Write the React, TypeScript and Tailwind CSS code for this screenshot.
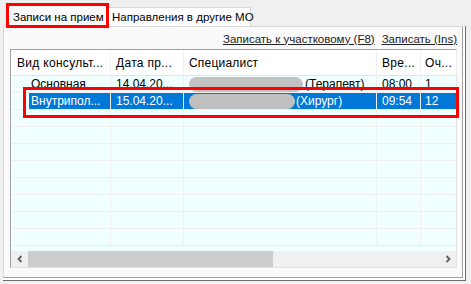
import React from "react";

const rowsEmpty = Array.from({ length: 8 });

function Cell({ w, children, cls = "" }: { w: string; children?: React.ReactNode; cls?: string }) {
  return <div className={`${w} h-full shrink-0 border-r border-[#f0f0f0] flex items-center overflow-hidden whitespace-nowrap ${cls}`}>{children}</div>;
}

export default function App() {
  return (
    <div
      className="w-[471px] h-[284px] bg-[#f0f0f0] relative overflow-hidden text-[12px] leading-[14px] text-black whitespace-nowrap"
      style={{ fontFamily: '"Liberation Sans", Arial, sans-serif' }}
    >
      <div className="pt-[4px] pl-[6px] flex items-end h-[26px] text-[11.5px]">
        <div className="w-[102px] h-[22px] bg-[#fafafa] border border-b-0 border-[#d9d9d9] flex items-center pl-[6px] relative z-10 mb-[-1px]">
          Записи на прием
        </div>
        <div className="w-[143px] h-[19px] bg-white border border-b-0 border-l-0 border-[#d9d9d9] flex items-center pl-[4px]">
          Направления в другие МО
        </div>
      </div>
      <div className="ml-[3px] w-[463px] h-[255px] border-r border-b border-[#6d6d6d] bg-white">
        <div className="w-[460px] h-[252px] bg-[#fafafa] border border-[#d9d9d9] border-r-[#a0a0a0] border-b-[#a0a0a0] pt-[3px]">
          <div className="flex justify-end gap-[7px] pr-[5px] h-[17px] items-center text-[#222] text-[11.5px]">
            <span className="underline">Записать к участковому (F8)</span>
            <span className="underline">Записать (Ins)</span>
          </div>
          <div className="ml-[6px] mt-[2px] w-[447px] h-[219px] border border-[#a0a0a0] border-r-[#e3e3e3] border-b-[#e3e3e3] bg-white flex flex-col">
            <div className="h-[26px] flex bg-white border-b border-[#e5e5e5] shrink-0">
              <Cell w="w-[100px]" cls="pl-[6px] border-[#e5e5e5] tracking-[0.3px]">Вид консульт...</Cell>
              <Cell w="w-[73px]" cls="pl-[5px] border-[#e5e5e5] tracking-[0.3px]">Дата пр...</Cell>
              <Cell w="w-[193px]" cls="pl-[5px] border-[#e5e5e5] tracking-[0.2px]">Специалист</Cell>
              <Cell w="w-[44px]" cls="pl-[5px] border-[#e5e5e5] tracking-[0.3px]">Вре...</Cell>
              <Cell w="w-[36px]" cls="pl-[4px] border-[#e5e5e5] tracking-[0.3px]">Оч...</Cell>
            </div>
            <div className="flex-1 bg-[#f0ffff] overflow-hidden">
              <div className="h-[17px] flex border-b border-[#f0f0f0]">
                <Cell w="w-[100px]" cls="pl-[20px]">Основная</Cell>
                <Cell w="w-[73px]" cls="pl-[5px]">14.04.20...</Cell>
                <Cell w="w-[193px]" cls="pl-[5px]">
                  <span className="inline-block w-[114px] h-[15px] rounded-full bg-[#c3c3c3] shrink-0" />
                  <span className="ml-[2px]">(Терапевт)</span>
                </Cell>
                <Cell w="w-[44px]" cls="pl-[5px]">08:00</Cell>
                <Cell w="w-[36px]" cls="pl-[4px]">1</Cell>
              </div>
              <div className="h-[17px] flex border-b border-[#f0f0f0]">
                <div className="w-[18px] shrink-0" />
                <div className="flex h-full bg-[#0078d7] text-white">
                  <Cell w="w-[82px]" cls="pl-[2px] border-[#7fb6e6]">Внутрипол...</Cell>
                  <Cell w="w-[73px]" cls="pl-[5px] border-[#7fb6e6]">15.04.20...</Cell>
                  <Cell w="w-[193px]" cls="pl-[5px] border-[#7fb6e6]">
                    <span className="inline-block w-[106px] h-[15px] rounded-full bg-[#bfbfbf] shrink-0" />
                    <span className="ml-[1px]">(Хирург)</span>
                  </Cell>
                  <Cell w="w-[44px]" cls="pl-[5px] border-[#7fb6e6]">09:54</Cell>
                  <Cell w="w-[36px]" cls="pl-[4px] border-[#7fb6e6]">12</Cell>
                </div>
              </div>
              {rowsEmpty.map((_, i) => (
                <div key={i} className="h-[17px] flex border-b border-[#f0f0f0]">
                  <Cell w="w-[100px]" />
                  <Cell w="w-[73px]" />
                  <Cell w="w-[193px]" />
                  <Cell w="w-[44px]" />
                  <Cell w="w-[36px]" />
                </div>
              ))}
            </div>
            <div className="h-[16px] shrink-0 flex bg-[#f0f0f0]">
              <div className="w-[17px] h-full flex items-center justify-center">
                <svg width="8" height="8" viewBox="0 0 8 8"><path d="M5.5 1 L2.5 4 L5.5 7" stroke="#606060" strokeWidth="1.8" fill="none" /></svg>
              </div>
              <div className="w-[245px] h-full bg-[#cdcdcd]" />
              <div className="flex-1" />
              <div className="w-[17px] h-full flex items-center justify-center">
                <svg width="8" height="8" viewBox="0 0 8 8"><path d="M2.5 1 L5.5 4 L2.5 7" stroke="#606060" strokeWidth="1.8" fill="none" /></svg>
              </div>
            </div>
          </div>
        </div>
      </div>
      <div className="absolute left-[6px] top-[3px] w-[103px] h-[25px] border-[3px] border-[#ff0000] z-20" />
      <div className="absolute left-[23px] top-[87px] w-[436px] h-[31px] border-[3px] border-[#ff0000] z-20" />
    </div>
  );
}
